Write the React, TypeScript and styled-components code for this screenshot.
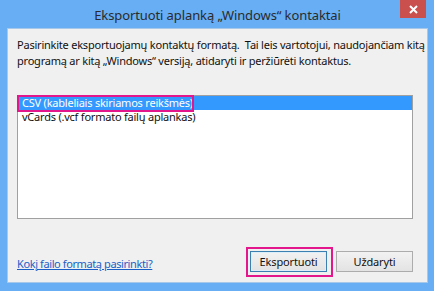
import React, { useState } from 'react'
import styled, { createGlobalStyle } from 'styled-components'

const GlobalStyle = createGlobalStyle`
  html, body {
    margin: 0;
    padding: 0;
    background: #ffffff;
  }
  body {
    font-family: "Noto Sans", "Open Sans", "Liberation Sans", sans-serif;
  }
`

const Frame = styled.div`
  width: 434px;
  height: 291px;
  box-sizing: border-box;
  background: #67aef4;
  display: flex;
  flex-direction: column;
  padding: 0 6px 8px 7px;
`

const TitleBar = styled.div`
  position: relative;
  height: 28px;
  display: flex;
  align-items: center;
  justify-content: center;
`

const Title = styled.div`
  font-size: 13px;
  color: #2b2b2b;
  letter-spacing: -0.1px;
  padding-top: 2px;
`

const CloseButton = styled.button`
  position: absolute;
  top: 0;
  right: 2px;
  width: 26px;
  height: 18px;
  border: none;
  padding: 0;
  background: #c9504d;
  display: flex;
  align-items: center;
  justify-content: center;
  cursor: pointer;
`

const Client = styled.div`
  flex: 1;
  background: #f0f0f0;
  border: 1px solid #a7c8e8;
  display: flex;
  flex-direction: column;
  padding: 8px 14px 10px 9px;
`

const Prompt = styled.p`
  margin: 0;
  font-size: 11px;
  line-height: 16px;
  color: #111111;
  letter-spacing: -0.22px;
  white-space: nowrap;
`

const ListBox = styled.div`
  margin-top: 26px;
  height: 122px;
  background: #ffffff;
  border: 1px solid #a0a0a0;
  display: flex;
  flex-direction: column;
`

const Row = styled.div<{ $selected?: boolean }>`
  position: relative;
  height: 14px;
  line-height: 14px;
  padding-left: 4px;
  font-size: 11px;
  letter-spacing: -0.22px;
  color: ${p => (p.$selected ? '#ffffff' : '#111111')};
  background: ${p => (p.$selected ? '#3399ff' : 'transparent')};
  cursor: default;
`

const RowMark = styled.span`
  position: absolute;
  left: -1px;
  top: -1px;
  width: 177px;
  height: 17px;
  box-sizing: border-box;
  border: 2px solid #e4168c;
  pointer-events: none;
`

const Footer = styled.div`
  margin-top: auto;
  display: flex;
  align-items: center;
`

const HelpLink = styled.a`
  font-size: 11px;
  color: #1a5fc8;
  text-decoration: underline;
  letter-spacing: -0.4px;
  margin-top: 4px;
`

const Buttons = styled.div`
  margin-left: auto;
  display: flex;
  gap: 9px;
`

const Marked = styled.div`
  position: relative;
  display: flex;
`

const ButtonMark = styled.span`
  position: absolute;
  top: -4px;
  left: -4px;
  right: -6px;
  bottom: -5px;
  border: 2px solid #e4168c;
  pointer-events: none;
`

const Button = styled.button<{ $default?: boolean }>`
  width: 77px;
  height: 21px;
  box-sizing: border-box;
  font-family: inherit;
  font-size: 11px;
  color: #111111;
  letter-spacing: -0.15px;
  padding: 0;
  background: linear-gradient(#f2f2f2, #e3e3e3);
  border: 1px solid ${p => (p.$default ? '#3c7fb1' : '#acacac')};
  box-shadow: ${p => (p.$default ? 'inset 0 0 0 1px #ddeefb' : 'none')};
  cursor: pointer;
`

const formats = [
  'CSV (kableliais skiriamos reikšmės)',
  'vCards (.vcf formato failų aplankas)',
]

export default function App() {
  const [selected, setSelected] = useState(0)

  return (
    <>
      <GlobalStyle />
      <Frame>
        <TitleBar>
          <Title>Eksportuoti aplanką „Windows“ kontaktai</Title>
          <CloseButton aria-label="Uždaryti">
            <svg width="9" height="9" viewBox="0 0 9 9">
              <path d="M1 1 L8 8 M8 1 L1 8" stroke="#ffffff" strokeWidth="2" />
            </svg>
          </CloseButton>
        </TitleBar>
        <Client>
          <Prompt>
            Pasirinkite eksportuojamų kontaktų formatą.&nbsp; Tai leis vartotojui, naudojančiam kitą
            <br />
            programą ar kitą „Windows“ versiją, atidaryti ir peržiūrėti kontaktus.
          </Prompt>
          <ListBox>
            {formats.map((f, i) => (
              <Row key={f} $selected={selected === i} onClick={() => setSelected(i)}>
                {f}
                {i === 0 && <RowMark />}
              </Row>
            ))}
          </ListBox>
          <Footer>
            <HelpLink href="#">Kokį failo formatą pasirinkti?</HelpLink>
            <Buttons>
              <Marked>
                <Button $default>Eksportuoti</Button>
                <ButtonMark />
              </Marked>
              <Button>Uždaryti</Button>
            </Buttons>
          </Footer>
        </Client>
      </Frame>
    </>
  )
}
